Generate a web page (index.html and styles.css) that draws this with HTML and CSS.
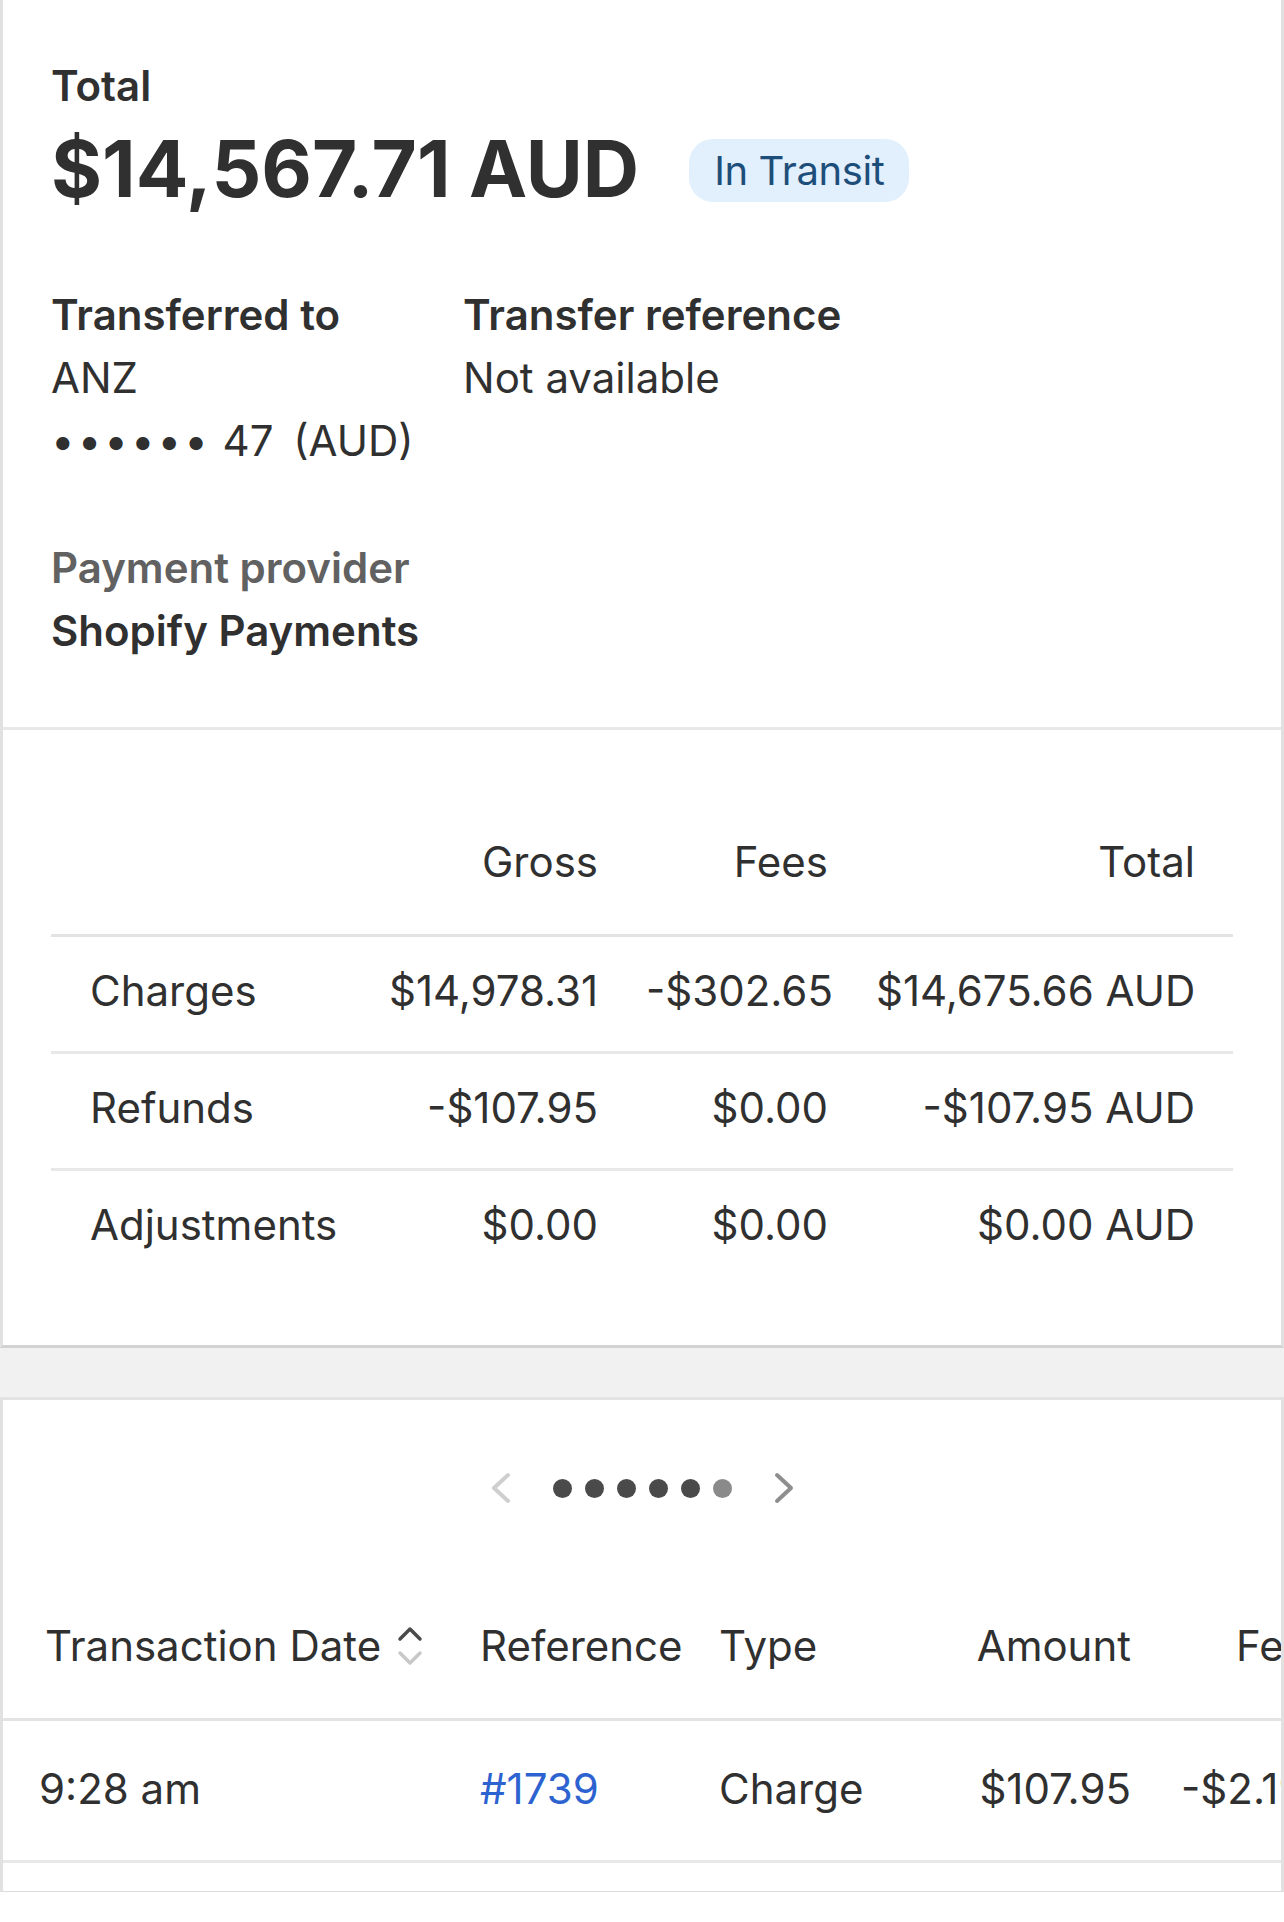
FILE: index.html
```html
<!DOCTYPE html>
<html lang="en">
<head>
    <meta charset="UTF-8">
    <meta name="viewport" content="width=device-width, initial-scale=1.0">
    <title>Payout</title>
    <link rel="stylesheet" href="styles.css">
</head>
<body>
    <!-- Payout summary -->
    <div class="card summary-card">
        <section class="summary">
            <div class="label">Total</div>
            <div class="total-row">
                <span class="amount">$14,567.71 AUD</span>
                <span class="badge">In Transit</span>
            </div>

            <div class="details">
                <div>
                    <div class="label">Transferred to</div>
                    <div>ANZ</div>
                    <div class="account"><span class="mask">••••••</span> 47 <span class="currency">(AUD)</span></div>
                </div>
                <div>
                    <div class="label">Transfer reference</div>
                    <div>Not available</div>
                </div>
            </div>

            <div class="provider">
                <div class="label muted">Payment provider</div>
                <div class="label">Shopify Payments</div>
            </div>
        </section>

        <section class="breakdown">
            <table class="breakdown-table">
                <colgroup>
                    <col class="col-name">
                    <col class="col-gross">
                    <col class="col-fees">
                    <col class="col-total">
                </colgroup>
                <thead>
                    <tr>
                        <th></th>
                        <th>Gross</th>
                        <th>Fees</th>
                        <th>Total</th>
                    </tr>
                </thead>
                <tbody>
                    <tr>
                        <td>Charges</td>
                        <td>$14,978.31</td>
                        <td>-$302.65</td>
                        <td>$14,675.66 AUD</td>
                    </tr>
                    <tr>
                        <td>Refunds</td>
                        <td>-$107.95</td>
                        <td>$0.00</td>
                        <td>-$107.95 AUD</td>
                    </tr>
                    <tr>
                        <td>Adjustments</td>
                        <td>$0.00</td>
                        <td>$0.00</td>
                        <td>$0.00 AUD</td>
                    </tr>
                </tbody>
            </table>
        </section>
    </div>

    <div class="gap"></div>

    <!-- Transactions -->
    <div class="card tx-card">
        <nav class="pager">
            <svg class="chev prev" width="20" height="34" viewBox="0 0 20 34"><path d="M17 4 L3 17 L17 30"/></svg>
            <div class="dots">
                <span class="dot"></span>
                <span class="dot"></span>
                <span class="dot"></span>
                <span class="dot"></span>
                <span class="dot"></span>
                <span class="dot current"></span>
            </div>
            <svg class="chev next" width="20" height="34" viewBox="0 0 20 34"><path d="M3 4 L17 17 L3 30"/></svg>
        </nav>

        <table class="tx-table">
            <colgroup>
                <col class="col-date">
                <col class="col-ref">
                <col class="col-type">
                <col class="col-amount">
                <col class="col-fee">
            </colgroup>
            <thead>
                <tr>
                    <th>
                        <span class="sort">Transaction Date
                            <svg width="26" height="42" viewBox="0 0 26 42">
                                <path class="up" d="M3 14 L13 4 L23 14"/>
                                <path class="down" d="M3 28 L13 38 L23 28"/>
                            </svg>
                        </span>
                    </th>
                    <th>Reference</th>
                    <th>Type</th>
                    <th class="num">Amount</th>
                    <th class="fee-head">Fees</th>
                </tr>
            </thead>
            <tbody>
                <tr>
                    <td>9:28 am</td>
                    <td><a href="#" class="link">#1739</a></td>
                    <td>Charge</td>
                    <td class="num">$107.95</td>
                    <td class="fee">-$2.19</td>
                </tr>
            </tbody>
        </table>
    </div>
</body>
</html>
```

FILE: styles.css
```css
body {
    margin: 0;
    background-color: #fff;
    font-family: Inter, "Noto Sans", sans-serif;
    font-size: 42px;
    line-height: 63px;
    color: #303030;
}
.card {
    background-color: #fff;
    border-left: 3px solid #e1e1e1;
    border-right: 3px solid #e1e1e1;
}
.summary-card {
    border-bottom: 3px solid #d2d2d2;
    box-shadow: 0 2px 0 #dedede;
}
.summary {
    padding: 54px 48px 65px;
}
.label {
    font-weight: 600;
}
.muted {
    color: #616161;
}
.total-row {
    display: flex;
    align-items: center;
    gap: 50px;
    margin-top: 4px;
}
.amount {
    font-size: 78px;
    line-height: 96px;
    font-weight: 700;
}
.badge {
    background-color: #e2effd;
    color: #1d4e7a;
    border-radius: 24px;
    padding: 0 25px;
    height: 63px;
    font-size: 40px;
    letter-spacing: -0.4px;
    line-height: 63px;
    margin-top: 3px;
}
.details {
    display: grid;
    grid-template-columns: 412px 1fr;
    margin-top: 66px;
}
.account .mask {
    letter-spacing: 3px;
}
.account .currency {
    margin-left: 8px;
}
.provider {
    margin-top: 64px;
}

/* breakdown table */
.breakdown {
    border-top: 3px solid #e8e8e8;
    padding: 60px 48px 60px;
}
table {
    border-collapse: collapse;
    table-layout: fixed;
}
.breakdown-table {
    width: 1182px;
}
.col-name { width: 314px; }
.col-gross { width: 257px; }
.col-fees { width: 230px; }
.col-total { width: 381px; }
.breakdown-table th,
.breakdown-table td {
    font-weight: 400;
    line-height: 60px;
    text-align: right;
    padding: 24px 24px 30px;
    white-space: nowrap;
}
.breakdown-table th {
    padding-top: 42px;
    padding-bottom: 42px;
    border-bottom: 3px solid #e3e3e3;
}
.breakdown-table tbody tr + tr td {
    border-top: 3px solid #e8e8e8;
}
.breakdown-table td:first-child {
    text-align: left;
    padding-left: 39px;
}
.breakdown-table th:last-child,
.breakdown-table td:last-child {
    padding-right: 38px;
}

.gap {
    height: 49px;
    background-color: #f1f1f1;
}

/* transactions */
.tx-card {
    border-top: 3px solid #e3e3e3;
    border-bottom: 1px solid #dcdcdc;
    padding: 71px 0 28px;
    overflow: hidden;
}
.pager {
    display: flex;
    justify-content: center;
    align-items: center;
    gap: 42px;
    height: 34px;
}
.chev path {
    fill: none;
    stroke-width: 4;
    stroke-linecap: round;
    stroke-linejoin: round;
}
.prev path {
    stroke: #cfcfcf;
}
.next path {
    stroke: #8e8e8e;
}
.dots {
    display: flex;
    gap: 13px;
}
.dot {
    width: 19px;
    height: 19px;
    border-radius: 50%;
    background-color: #4a4a4a;
}
.dot.current {
    background-color: #8a8a8a;
}
.tx-table {
    width: 1332px;
}
.col-date { width: 453px; }
.col-ref { width: 239px; }
.col-type { width: 245px; }
.col-amount { width: 215px; }
.col-fee { width: 180px; }
.tx-table th,
.tx-table td {
    font-weight: 400;
    line-height: 60px;
    text-align: left;
    padding: 38px 24px 41px;
    white-space: nowrap;
}
.tx-table th {
    padding-top: 111px;
    padding-bottom: 42px;
    border-bottom: 3px solid #e3e3e3;
}
.tx-table td {
    border-bottom: 3px solid #e8e8e8;
}
.tx-table th:first-child,
.tx-table td:first-child {
    padding-left: 36px;
}
.tx-table .num {
    text-align: right;
}
.tx-table .fee-head {
    padding-left: 81px;
}
.tx-table .fee {
    padding-left: 26px;
}
.sort {
    display: inline-flex;
    align-items: center;
    gap: 16px;
    margin-left: 6px;
}
.sort path {
    fill: none;
    stroke-width: 3.5;
    stroke-linecap: round;
    stroke-linejoin: round;
}
.sort .up {
    stroke: #4a4a4a;
}
.sort .down {
    stroke: #c8c8c8;
}
.link {
    color: #2c63d0;
    text-decoration: none;
}
```
